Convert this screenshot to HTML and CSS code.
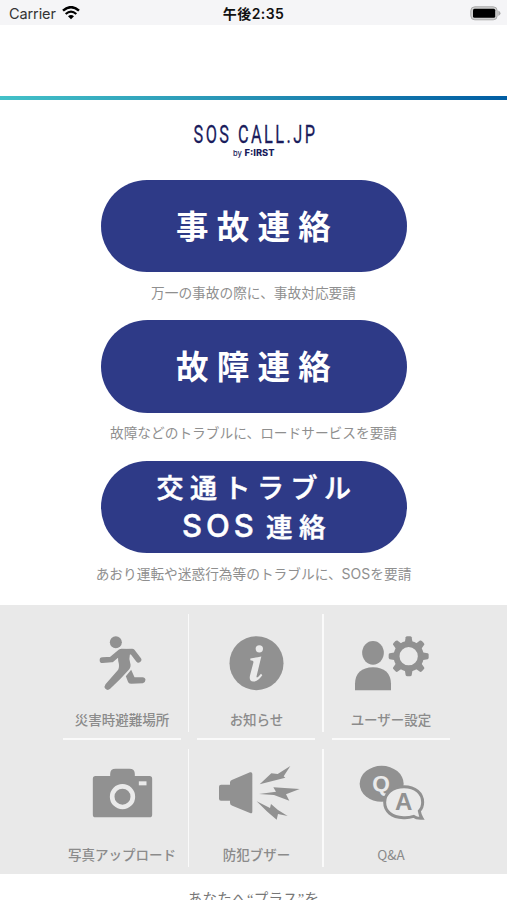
FILE: index.html
```html
<!DOCTYPE html>
<html lang="ja">
<head>
    <meta charset="UTF-8">
    <meta name="viewport" content="width=device-width, initial-scale=1.0">
    <title>SOS CALL.JP</title>
    <link rel="stylesheet" href="styles.css">
</head>
<body>
    <div class="statusbar">
        <div class="carrier">
            <span>Carrier</span>
            <svg class="wifi" width="18" height="14" viewBox="0 0 54 42">
                <path d="M3 14 Q27 -7 51 14" fill="none" stroke="#000" stroke-width="7.500"/>
                <path d="M11 24 Q27 10 43 24" fill="none" stroke="#000" stroke-width="6.500"/>
                <path d="M18 31 Q27 23 36 31 L27 40 Z"/>
            </svg>
        </div>
        <div class="time">午後2:35</div>
        <svg class="battery" width="31" height="15" viewBox="0 0 31 15">
            <rect x="0.8" y="0.8" width="26.4" height="13" rx="4" fill="#d0d0d0" stroke="#aaa"/>
            <rect x="3" y="2.8" width="22.2" height="9" rx="1.5"/>
            <path d="M28.3 4.5 Q30.5 5.5 30.5 7.3 Q30.5 9 28.3 10 Z" fill="#aaa"/>
        </svg>
    </div>
    <header class="header"></header>

    <main class="main">
        <h1 class="logo">
            <svg width="140" height="38" viewBox="-7 0 140 38">
                <text class="logo-name" x="2.5" y="23" textLength="124" lengthAdjust="spacingAndGlyphs">SOS CALL.JP</text>
                <text class="logo-by" x="42" y="36">by</text>
                <text class="logo-first" x="53.5" y="36.3" textLength="30" lengthAdjust="spacingAndGlyphs">F:IRST</text>
            </svg>
        </h1>

        <a class="button" href="#">事故連絡</a>
        <p class="caption">万一の事故の際に、事故対応要請</p>

        <a class="button" href="#">故障連絡</a>
        <p class="caption">故障などのトラブルに、ロードサービスを要請</p>

        <a class="button button-small" href="#">
            <span>交通トラブル</span>
            <span class="line2"><span class="latin">SOS</span>連絡</span>
        </a>
        <p class="caption">あおり運転や迷惑行為等のトラブルに、<span class="sos">SOS</span>を要請</p>
    </main>

    <nav class="menu">
        <a class="item" href="#">
            <svg class="icon" viewBox="-16.5 16.5 403.5 285">
                <circle cx="166" cy="128" r="18"/>
                <path d="M126 182 L153 180 L180 157 L215 156 L234 181" fill="none" stroke="#919191" stroke-width="17" stroke-linecap="round" stroke-linejoin="round"/>
                <path d="M172 158 L182 148 L213 149 L208 166 Q205 178 209 190 Q213 202 205 211 L180 238 L149 268 Q141 275 134 267 Q130 261 135 254 L173 211 Q178 202 173 184 Z"/>
                <path d="M212 211 L196 230 L203 248 Q206 253 213 253 L247 251 Q255 249 255 241 Q254 233 246 233 L222 233 Z"/>
            </svg>
            <span class="label">災害時避難場所</span>
        </a>
        <a class="item" href="#">
            <svg class="icon" viewBox="-3 16.5 403.5 285">
                <circle cx="199.500" cy="191" r="81"/>
                <circle cx="208" cy="148" r="11" fill="#eaeaea"/>
                <path d="M181 177 Q199 174 214 171 L200 229 Q198 237 205 232 L213 223 L217 227 Q204 245 191 246 Q176 247 180 228 L190 190 Q192 182 181 182 Z" fill="#eaeaea"/>
            </svg>
            <span class="label">お知らせ</span>
        </a>
        <a class="item" href="#">
            <svg class="icon" viewBox="9 16.5 403.5 285">
                <ellipse cx="156" cy="160" rx="32.500" ry="35.500"/>
                <path d="M102 272 V252 Q104 204 156 203 Q208 204 210 252 V272 Z"/>
                <circle cx="263" cy="170" r="36.500" fill="none" stroke="#919191" stroke-width="18"/>
                <g>
                    <path id="tooth" d="M251 131 L254 113 Q255 110 259 110 H267 Q271 110 272 113 L275 131 Z"/>
                    <use href="#tooth" transform="rotate(45 263 170)"/>
                    <use href="#tooth" transform="rotate(90 263 170)"/>
                    <use href="#tooth" transform="rotate(135 263 170)"/>
                    <use href="#tooth" transform="rotate(180 263 170)"/>
                    <use href="#tooth" transform="rotate(225 263 170)"/>
                    <use href="#tooth" transform="rotate(270 263 170)"/>
                    <use href="#tooth" transform="rotate(315 263 170)"/>
                </g>
            </svg>
            <span class="label">ユーザー設定</span>
        </a>
        <a class="item" href="#">
            <svg class="icon" viewBox="-16.5 0 403.5 285">
                <path d="M97 116 Q97 108 105 108 H149 V102 Q149 86 165 86 H207 Q223 86 223 102 V108 H267 Q275 108 275 116 V224 Q275 232 267 232 H105 Q97 232 97 224 Z"/>
                <circle cx="186" cy="170" r="31" fill="none" stroke="#eaeaea" stroke-width="14"/>
                <rect x="235" y="124" width="23" height="12" fill="#eaeaea"/>
            </svg>
            <span class="label">写真アップロード</span>
        </a>
        <a class="item" href="#">
            <svg class="icon" viewBox="-3 0 403.5 285">
                <path d="M87 140 Q87 134 93 134 H120 V127 Q120 121 127 119 L180 97 Q187 95 187 102 V215 Q187 222 180 219 L127 197 Q120 195 120 189 V182 H93 Q87 182 87 176 Z"/>
                <path d="M209 133 L244 100 L263 102 L301 78 L281 109 L286 113 Z"/>
                <path d="M207 162 L258 155 L250 142 L329 147 L288 163 L298 182 L252 165 Z"/>
                <path d="M200 184 L240 204 L243 192 L264 210 L293 228 L264 222 L260 239 L232 215 Z"/>
            </svg>
            <span class="label">防犯ブザー</span>
        </a>
        <a class="item" href="#">
            <svg class="icon" viewBox="9 0 403.5 285">
                <ellipse cx="182" cy="131.500" rx="66" ry="54"/>
                <text class="qa qa-q" x="180" y="153">Q</text>
                <path d="M303 235 Q286 236 278 229 Q262 234 247 233 C212 232 191 214 191 187 C191 160 215 140 249 140 C283 140 305 160 305 187 Q305 203 295 213 Q297 226 303 235 Z" fill="#eaeaea" stroke="#919191" stroke-width="9"/>
                <text class="qa qa-a" x="248" y="210">A</text>
            </svg>
            <span class="label label-latin">Q&amp;A</span>
        </a>
    </nav>

    <footer class="footer">あなたへ<span class="quote">“</span>プラス<span class="quote">”</span>を</footer>
</body>
</html>
```
FILE: styles.css
```css
* {
    box-sizing: border-box;
}
body {
    margin: 0;
    height: 900px;
    overflow: hidden;
    background-color: #fff;
    font-family: "Noto Sans CJK JP", sans-serif;
}
a {
    color: inherit;
    text-decoration: none;
}

.statusbar {
    display: grid;
    grid-template-columns: 1fr auto 1fr;
    align-items: center;
    height: 25px;
    padding: 2px 6px 0 9px;
    background-color: #f5f5f7;
}
.carrier {
    display: flex;
    align-items: center;
    gap: 6px;
    font-family: Inter, sans-serif;
    font-size: 14.5px;
    letter-spacing: -0.1px;
    color: #333;
}
.wifi {
    margin-bottom: 1px;
}
.time {
    margin-right: 3px;
    font-family: Inter, "Noto Sans CJK JP", sans-serif;
    font-size: 14px;
    font-weight: 600;
    line-height: 20px;
    letter-spacing: 0.4px;
    color: #111;
}
.battery {
    justify-self: end;
}

.header {
    height: 75px;
    border-bottom: 4px solid;
    border-image: linear-gradient(90deg, #43c1c8, #2590b4 50%, #005da3) 1;
}

.main {
    display: flex;
    flex-direction: column;
    align-items: center;
    height: 505px;
    padding-top: 20px;
}
.logo {
    margin: 0 0 21.5px;
    height: 38px;
    line-height: 0;
}
.logo-name {
    font-family: Roboto, sans-serif;
    font-size: 26.5px;
    font-weight: 400;
    letter-spacing: 4px;
    fill: #1a1c5c;
    stroke: #1a1c5c;
    stroke-width: 0.3px;
}
.logo-by {
    font-family: Inter, sans-serif;
    font-size: 7.5px;
    font-weight: 500;
    fill: #1a1c5c;
}
.logo-first {
    font-family: Inter, sans-serif;
    font-size: 9.5px;
    font-weight: 800;
    fill: #1a1c5c;
}

.button {
    display: flex;
    flex-direction: column;
    align-items: center;
    justify-content: center;
    width: 306px;
    height: 92.5px;
    padding: 0 0 2px 8px;
    border-radius: 47px;
    background-color: #2e3a87;
    color: #fff;
    font-size: 32.5px;
    font-weight: 700;
    line-height: 46px;
    letter-spacing: 8.3px;
}
.button-small {
    font-size: 27px;
    font-weight: 500;
    line-height: 39px;
    letter-spacing: 6.5px;
    padding: 0 0 1px 7px;
    -webkit-text-stroke: 0.5px #fff;
}
.line2 {
    font-size: 26.5px;
}
.latin {
    margin-right: 8px;
    font-family: Inter, sans-serif;
    font-size: 31px;
    font-weight: 500;
    letter-spacing: 4px;
    line-height: 30px;
}
.caption {
    margin: 9.5px 0 18.5px;
    height: 20px;
    font-size: 13.7px;
    line-height: 20px;
    color: #8f8f8f;
    white-space: nowrap;
}
.sos {
    font-family: Inter, sans-serif;
    font-size: 14px;
}

.menu {
    display: grid;
    grid-template-columns: repeat(3, 134.5px);
    grid-auto-rows: 134.5px;
    justify-content: center;
    padding-left: 6px;
    background-color: #e9e9e9;
}
.item {
    display: flex;
    flex-direction: column;
    align-items: center;
    color: #8b8b8b;
    background-image: linear-gradient(#fafafa, #fafafa), linear-gradient(#fafafa, #fafafa);
    background-repeat: no-repeat;
    background-size: 118px 2px, 2px 118px;
    background-position: 8px 133px, 133px 9px;
}
.item:nth-child(3n) {
    background-size: 118px 2px, 0 0;
}
.item:nth-child(n+4) {
    background-size: 0 0, 2px 118px;
}
.item:last-child {
    background-image: none;
}
.icon {
    width: 134.5px;
    height: 95px;
    fill: #919191;
}
.label {
    margin-top: 9px;
    height: 20px;
    font-size: 13.5px;
    font-weight: 500;
    line-height: 20px;
    white-space: nowrap;
}
.label-latin {
    font-weight: 400;
}
.qa {
    font-family: "Liberation Sans", sans-serif;
    font-weight: 700;
    text-anchor: middle;
}
.qa-q {
    font-size: 68px;
    fill: #eaeaea;
}
.qa-a {
    font-size: 72px;
    fill: #919191;
}

.footer {
    padding-top: 13px;
    font-size: 14.5px;
    line-height: 22px;
    letter-spacing: 0.3px;
    text-align: center;
    color: #777;
}
.quote {
    font-family: "Liberation Serif", serif;
}
```
